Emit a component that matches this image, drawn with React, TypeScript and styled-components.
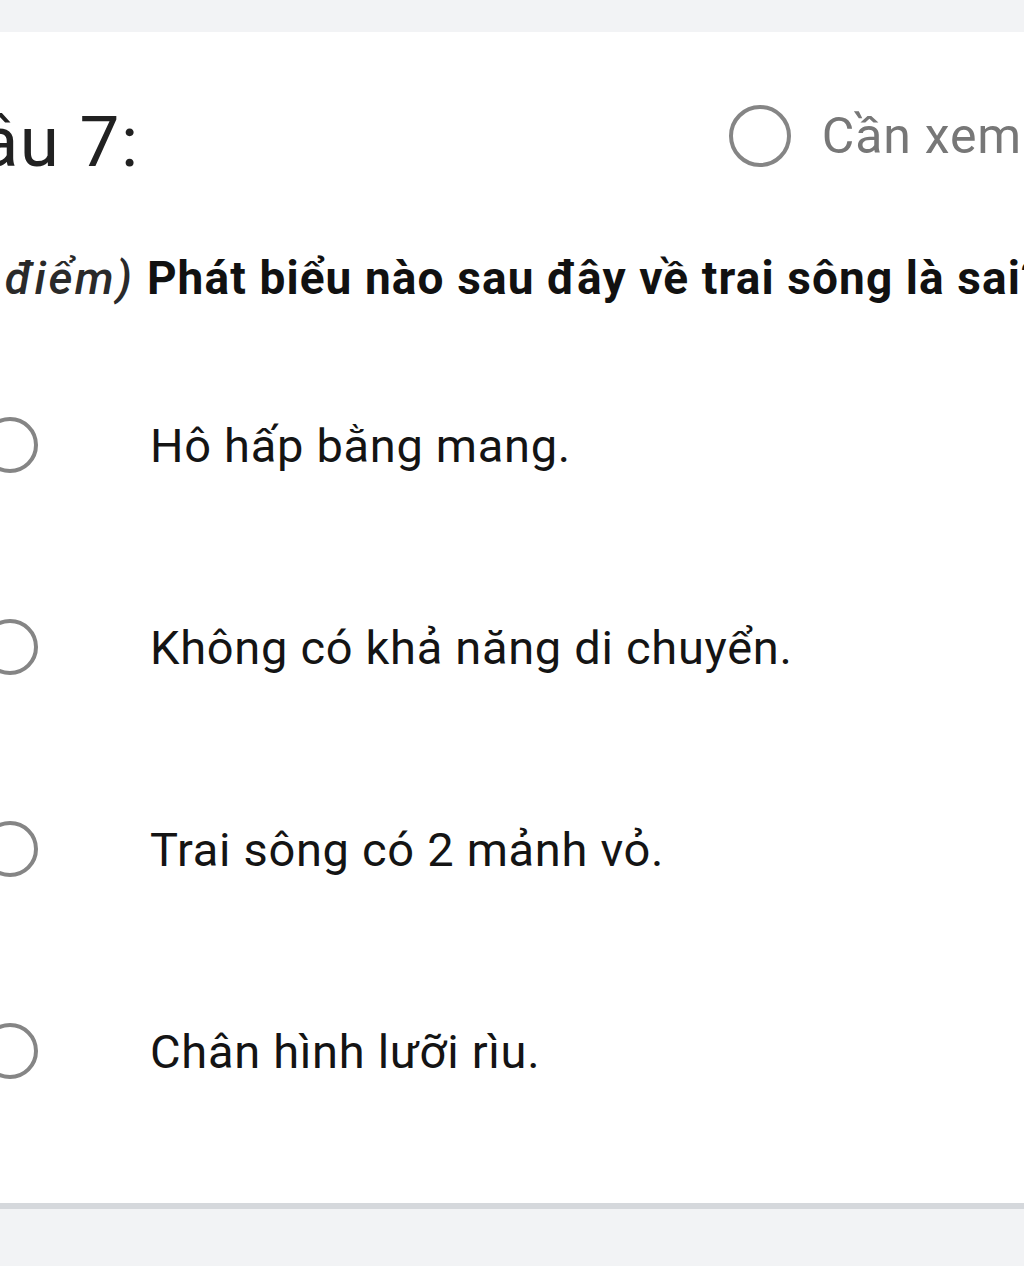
import styled, { createGlobalStyle } from 'styled-components';

const GlobalStyle = createGlobalStyle`
  html, body {
    margin: 0;
    padding: 0;
    background: #ffffff;
    overflow: hidden;
  }
  body {
    font-family: Roboto, 'Noto Sans', 'DejaVu Sans', sans-serif;
  }
`;

const Page = styled.div`
  width: 1024px;
  height: 1280px;
  overflow: hidden;
  display: flex;
  flex-direction: column;
`;

const TopStrip = styled.div`
  height: 32px;
  background: #f2f3f5;
  flex-shrink: 0;
`;

const Card = styled.section`
  background: #ffffff;
  height: 1171px;
  flex-shrink: 0;
  border-bottom: 6px solid #d5d8dc;
  display: flex;
  flex-direction: column;
`;

const BottomStrip = styled.div`
  height: 57px;
  background: #f2f3f5;
  flex-shrink: 0;
`;

const Header = styled.div`
  display: flex;
  align-items: center;
  justify-content: space-between;
  height: 70px;
  margin-top: 74px;
  white-space: nowrap;
`;

const QuestionNumber = styled.h2`
  margin: 0 0 0 -68px;
  font-size: 71px;
  font-weight: 400;
  letter-spacing: 1.5px;
  color: #212121;
  line-height: 1;
`;

const ReviewFlag = styled.label`
  display: flex;
  align-items: center;
  gap: 31px;
  margin: 0 -65px 10px 0;
  font-size: 50px;
  letter-spacing: 0.8px;
  color: #777777;
`;

const Radio = styled.span<{ size: number }>`
  display: inline-block;
  box-sizing: border-box;
  width: ${(p) => p.size}px;
  height: ${(p) => p.size}px;
  border-radius: 50%;
  border: 4px solid #858585;
  flex-shrink: 0;
`;

const QuestionText = styled.p`
  margin: 72px 0 0 -55px;
  font-size: 46px;
  line-height: 60px;
  letter-spacing: 1.1px;
  white-space: nowrap;
  font-weight: 700;
  color: #111111;
`;

const Points = styled.em`
  font-weight: 500;
  letter-spacing: 2.5px;
  color: #2a2a2a;
`;

const OptionList = styled.ul`
  list-style: none;
  margin: 109px 0 0 -18px;
  padding: 0;
  display: flex;
  flex-direction: column;
  gap: 146px;
`;

const Option = styled.li`
  display: flex;
  align-items: center;
  gap: 112px;
  height: 56px;
`;

const OptionLabel = styled.span`
  font-size: 47px;
  letter-spacing: 0.7px;
  color: #141414;
  white-space: nowrap;
`;

const options = [
  'Hô hấp bằng mang.',
  'Không có khả năng di chuyển.',
  'Trai sông có 2 mảnh vỏ.',
  'Chân hình lưỡi rìu.',
];

export default function App() {
  return (
    <Page>
      <GlobalStyle />
      <TopStrip />
      <Card>
        <Header>
          <QuestionNumber>Câu 7:</QuestionNumber>
          <ReviewFlag>
            <Radio size={62} />
            Cần xem lại
          </ReviewFlag>
        </Header>
        <QuestionText>
          <Points>(1 điểm)</Points> Phát biểu nào sau đây về trai sông là sai?
        </QuestionText>
        <OptionList>
          {options.map((o) => (
            <Option key={o}>
              <Radio size={56} />
              <OptionLabel>{o}</OptionLabel>
            </Option>
          ))}
        </OptionList>
      </Card>
      <BottomStrip />
    </Page>
  );
}
